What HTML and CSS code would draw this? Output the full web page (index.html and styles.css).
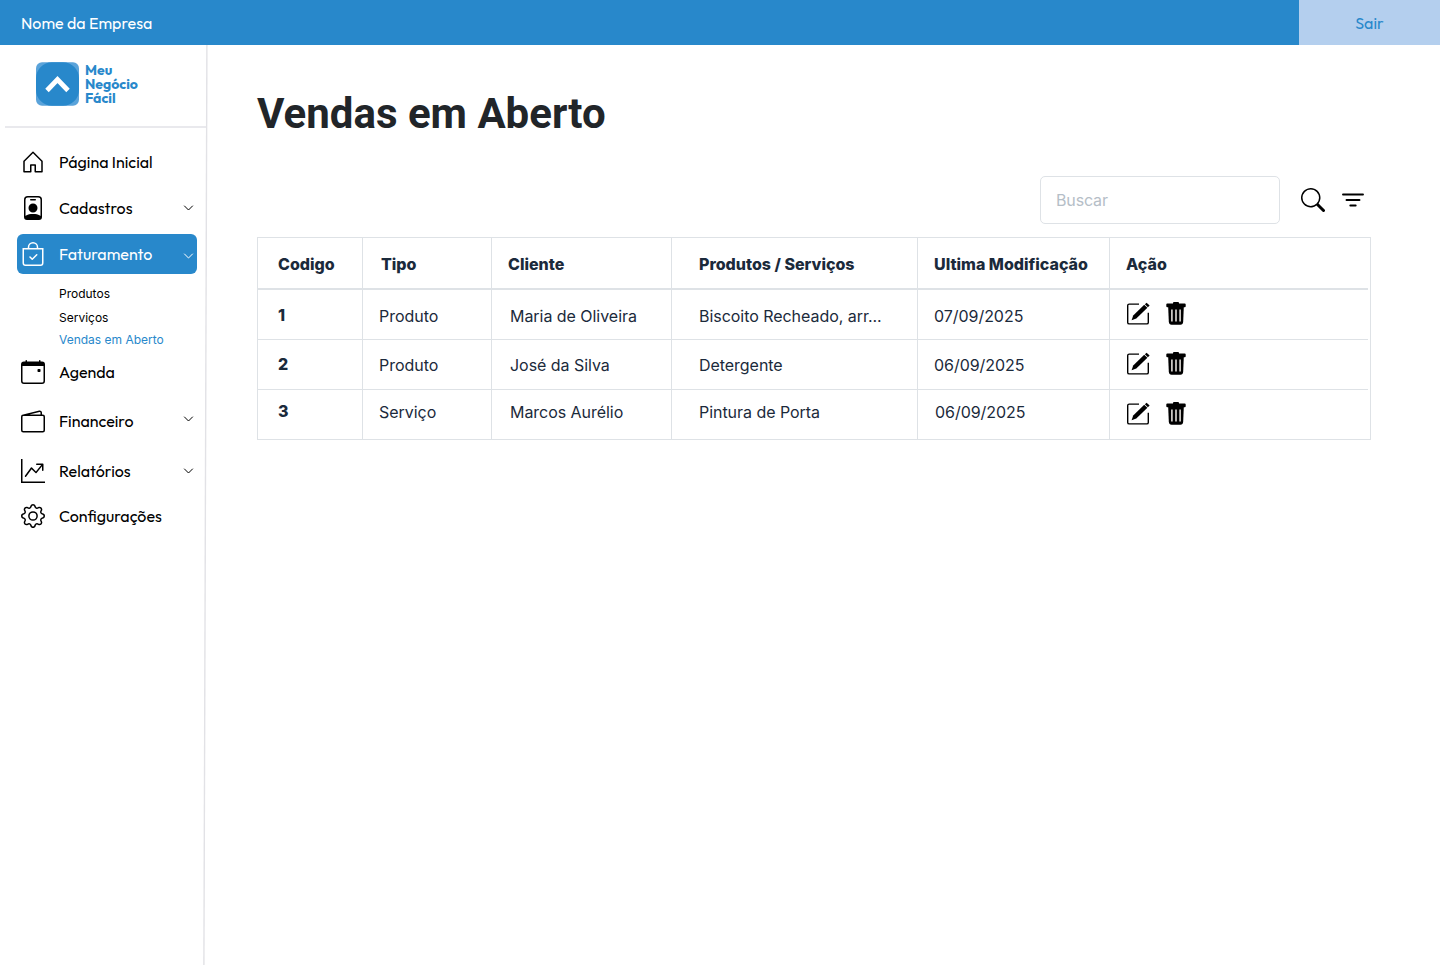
FILE: index.html
```html
<!DOCTYPE html>
<html lang="pt-BR">
<head>
<meta charset="utf-8">
<title>Vendas em Aberto</title>
<link rel="stylesheet" href="styles.css">
</head>
<body>
<svg class="defs" width="0" height="0">
  <symbol id="chevron" viewBox="0 0 12 8"><path d="M1.200 1.700 5.500 6l4.300-4.300" fill="none" stroke="currentColor" stroke-width="1"/></symbol>
  <symbol id="edit" viewBox="0 0 24 24">
    <path d="M13 2.1H3.2Q1.7 2.1 1.7 3.6v16.8q0 1.5 1.5 1.5h17.6q1.5 0 1.5-1.5V10.7" fill="none" stroke="#000" stroke-width="1.4"/>
    <path d="M5.6 18.3 7.2 13.4 18.200 2.800l3.200 3L10.300 16.600Z"/><path d="m18.900 2.200 1.700-1.500 3 2.900-1.700 1.600Z"/>
  </symbol>
  <symbol id="trash" viewBox="0 0 20 24">
    <path d="M2.2 5h15.6l-.6 14.6q-.2 3.2-2.8 3.2H5.6q-2.6 0-2.8-3.2Z"/>
    <path d="M7 1.500V1Q7 0 8 0h4q1 0 1 1v.5h5.700q1 0 1 1v1.700q0 1-1 1H1.300q-1 0-1-1V2.500q0-1 1-1Z"/>
    <path d="M5.900 7.500v12M10 7.500v12M14.100 7.500v12" stroke="#e0dcd8" stroke-width="1.600"/>
  </symbol>
</svg>
<header class="topbar"><span class="company">Nome da Empresa</span><a class="logout">Sair</a></header>
<div class="layout">
  <aside class="sidebar">
    <svg class="divider" width="6" height="920" viewBox="0 0 6 920"><path d="M4.900 0 1.900 920" stroke="#e2e2e6" stroke-width="1.400"/></svg>
    <div class="brand">
      <svg width="43" height="44" viewBox="0 0 43 44"><rect y=".3" width="43" height="43.500" rx="6" fill="#5aa3da"/><rect y=".3" width="43" height="43.500" rx="16" fill="#2888cb"/><path d="m11 28.500 10.500-11 10.500 11" fill="none" stroke="#fff" stroke-width="4.800"/></svg>
      <div class="brand-name"><span>Meu</span><span>Negócio</span><span>Fácil</span></div>
    </div>
    <nav class="nav">
      <a class="item"><svg class="icon" viewBox="0 0 16 16"><path d="M8.354 1.146a.5.5 0 0 0-.708 0l-6 6A.5.5 0 0 0 1.500 7.500v7a.5.5 0 0 0 .5.5h4.500a.5.5 0 0 0 .5-.5v-4h2v4a.5.5 0 0 0 .5.5H14a.5.5 0 0 0 .5-.5v-7a.5.5 0 0 0-.146-.354zM2.500 14V7.707l5.500-5.500 5.500 5.500V14H10v-4a.5.5 0 0 0-.5-.5h-3a.5.5 0 0 0-.5.5v4z"/></svg><span>Página Inicial</span></a>
      <a class="item cadastros"><svg class="icon" viewBox="0 0 16 16"><path d="M6.500 2a.5.5 0 0 0 0 1h3a.5.5 0 0 0 0-1zM11 8a3 3 0 1 1-6 0 3 3 0 0 1 6 0z"/><path d="M4.500 0A2.500 2.500 0 0 0 2 2.500V14a2 2 0 0 0 2 2h8a2 2 0 0 0 2-2V2.500A2.500 2.500 0 0 0 11.500 0zM3 2.500A1.500 1.500 0 0 1 4.500 1h7A1.500 1.500 0 0 1 13 2.500v10.795a4.200 4.200 0 0 0-.776-.492C11.392 12.387 10.063 12 8 12s-3.392.387-4.224.803a4.200 4.200 0 0 0-.776.492z"/></svg><span>Cadastros</span><svg class="chev"><use href="#chevron"/></svg></a>
      <a class="item active"><svg class="icon" viewBox="0 0 16 16"><path d="M10.854 8.146a.5.5 0 0 1 0 .708l-3 3a.5.5 0 0 1-.708 0l-1.500-1.500a.5.5 0 0 1 .708-.708L7.500 10.793l2.646-2.647a.5.5 0 0 1 .708 0z"/><path d="M8 1a2.500 2.500 0 0 1 2.500 2.500V4h-5v-.5A2.500 2.500 0 0 1 8 1zm3.500 3v-.5a3.500 3.500 0 1 0-7 0V4H1v10a2 2 0 0 0 2 2h10a2 2 0 0 0 2-2V4zM2 5h12v9a1 1 0 0 1-1 1H3a1 1 0 0 1-1-1z"/></svg><span>Faturamento</span><svg class="chev"><use href="#chevron"/></svg></a>
      <div class="submenu"><a>Produtos</a><a>Serviços</a><a class="current">Vendas em Aberto</a></div>
      <a class="item agenda"><svg class="icon" viewBox="0 0 16 16"><path d="M11 6.500a.5.5 0 0 1 .5-.5h1a.5.5 0 0 1 .5.5v1a.5.5 0 0 1-.5.5h-1a.5.5 0 0 1-.5-.5z"/><path d="M3.500 0a.5.5 0 0 1 .5.5V1h8V.5a.5.5 0 0 1 1 0V1h1a2 2 0 0 1 2 2v11a2 2 0 0 1-2 2H2a2 2 0 0 1-2-2V3a2 2 0 0 1 2-2h1V.5a.5.5 0 0 1 .5-.5M1 4v10a1 1 0 0 0 1 1h12a1 1 0 0 0 1-1V4z"/></svg><span>Agenda</span></a>
      <a class="item financeiro"><svg class="icon" viewBox="0 0 16 16"><path d="M12.136.326A1.500 1.500 0 0 1 14 1.780V3h.5A1.500 1.500 0 0 1 16 4.500v9a1.500 1.500 0 0 1-1.500 1.500h-13A1.500 1.500 0 0 1 0 13.500v-9a1.500 1.500 0 0 1 1.432-1.499zM5.562 3H13V1.780a.5.5 0 0 0-.621-.484zM1.500 4a.5.5 0 0 0-.5.5v9a.5.5 0 0 0 .5.5h13a.5.5 0 0 0 .5-.5v-9a.5.5 0 0 0-.5-.5z"/></svg><span>Financeiro</span><svg class="chev"><use href="#chevron"/></svg></a>
      <a class="item relatorios"><svg class="icon" viewBox="0 0 16 16"><path fill-rule="evenodd" d="M0 0h1v15h15v1H0zm10 3.500a.5.5 0 0 1 .5-.5h4a.5.5 0 0 1 .5.5v4a.5.5 0 0 1-1 0V4.900l-3.613 4.417a.5.5 0 0 1-.74.037L7.060 6.767l-3.656 5.027a.5.5 0 0 1-.808-.588l4-5.500a.5.5 0 0 1 .758-.06l2.609 2.610L13.445 4H10.500a.5.5 0 0 1-.5-.5"/></svg><span>Relatórios</span><svg class="chev"><use href="#chevron"/></svg></a>
      <a class="item config"><svg class="icon" viewBox="0 0 16 16"><path d="M8 4.754a3.246 3.246 0 1 0 0 6.492 3.246 3.246 0 0 0 0-6.492zM5.754 8a2.246 2.246 0 1 1 4.492 0 2.246 2.246 0 0 1-4.492 0z"/><path d="M9.796 1.343c-.527-1.790-3.065-1.790-3.592 0l-.094.319a.873.873 0 0 1-1.255.52l-.292-.16c-1.640-.892-3.433.902-2.540 2.541l.159.292a.873.873 0 0 1-.52 1.255l-.319.094c-1.790.527-1.790 3.065 0 3.592l.319.094a.873.873 0 0 1 .52 1.255l-.16.292c-.892 1.640.901 3.434 2.541 2.540l.292-.159a.873.873 0 0 1 1.255.52l.094.319c.527 1.790 3.065 1.790 3.592 0l.094-.319a.873.873 0 0 1 1.255-.52l.292.16c1.640.893 3.434-.902 2.540-2.541l-.159-.292a.873.873 0 0 1 .52-1.255l.319-.094c1.790-.527 1.790-3.065 0-3.592l-.319-.094a.873.873 0 0 1-.52-1.255l.16-.292c.893-1.640-.902-3.433-2.541-2.540l-.292.159a.873.873 0 0 1-1.255-.52zm-2.633.283c.246-.835 1.428-.835 1.674 0l.094.319a1.873 1.873 0 0 0 2.693 1.115l.291-.16c.764-.415 1.600.42 1.184 1.185l-.159.292a1.873 1.873 0 0 0 1.116 2.692l.318.094c.835.246.835 1.428 0 1.674l-.319.094a1.873 1.873 0 0 0-1.115 2.693l.16.291c.415.764-.42 1.600-1.185 1.184l-.291-.159a1.873 1.873 0 0 0-2.693 1.116l-.094.318c-.246.835-1.428.835-1.674 0l-.094-.319a1.873 1.873 0 0 0-2.692-1.115l-.292.16c-.764.415-1.600-.42-1.184-1.185l.159-.291A1.873 1.873 0 0 0 1.945 8.930l-.319-.094c-.835-.246-.835-1.428 0-1.674l.319-.094A1.873 1.873 0 0 0 3.060 4.377l-.16-.292c-.415-.764.42-1.600 1.185-1.184l.292.159a1.873 1.873 0 0 0 2.692-1.115z"/></svg><span>Configurações</span></a>
    </nav>
  </aside>
  <main class="content">
    <h1>Vendas em Aberto</h1>
    <div class="tools">
      <input class="search" type="text" placeholder="Buscar">
      <svg class="icon find" viewBox="0 0 16 16"><path d="M11.742 10.344a6.500 6.500 0 1 0-1.397 1.398h-.001c.03.04.062.078.098.115l3.850 3.850a1 1 0 0 0 1.415-1.414l-3.850-3.850a1.007 1.007 0 0 0-.115-.1zM12 6.500a5.500 5.500 0 1 1-11 0 5.500 5.500 0 0 1 11 0z"/></svg>
      <svg class="filter" width="24" height="24" viewBox="0 0 24 24"><path d="M2 6.500h20M5.500 12h13M9.300 17.500h5.400" stroke="#000" stroke-width="1.900" stroke-linecap="round"/></svg>
    </div>
    <div class="table">
      <div class="row head"><div>Codigo</div><div>Tipo</div><div>Cliente</div><div>Produtos / Serviços</div><div>Ultima Modificação</div><div>Ação</div></div>
      <div class="row first"><div>1</div><div>Produto</div><div>Maria de Oliveira</div><div>Biscoito Recheado, arr...</div><div>07/09/2025</div><div><svg class="edit"><use href="#edit"/></svg><svg class="trash"><use href="#trash"/></svg></div></div>
      <div class="row second"><div>2</div><div>Produto</div><div>José da Silva</div><div>Detergente</div><div>06/09/2025</div><div><svg class="edit"><use href="#edit"/></svg><svg class="trash"><use href="#trash"/></svg></div></div>
      <div class="row third"><div>3</div><div>Serviço</div><div>Marcos Aurélio</div><div>Pintura de Porta</div><div>06/09/2025</div><div><svg class="edit"><use href="#edit"/></svg><svg class="trash"><use href="#trash"/></svg></div></div>
    </div>
  </main>
</div>
</body>
</html>
```
FILE: styles.css
```css
* { box-sizing: border-box; }
body { margin: 0; background: #fff; font-family: Inter, sans-serif; color: #000; height: 965px; overflow: hidden; }
svg { display: block; flex: none; }
.defs { position: absolute; }
.topbar { height: 45px; background: #2888cb; display: flex; justify-content: space-between; font: 300 16px/46px Outfit, Lato, sans-serif; font-weight: 400; color: #fff; }
.company { padding-left: 21px; }
.logout { width: 141px; background: #b4cfee; color: #2888cb; text-align: center; }
.layout { display: flex; height: 920px; }
.sidebar { width: 208px; position: relative; }
.divider { position: absolute; right: 0; top: 0; }
.brand { height: 83px; margin: 0 2px 0 5px; padding: 17px 0 0 31px; border-bottom: 2px solid #e9e9ed; display: flex; gap: 6px; }
.brand-name { display: flex; flex-direction: column; font: 700 14px/14px Outfit, Lato, sans-serif; color: #2888cb; padding-top: 1px; }
.nav { padding: 14px 11px 0 17px; display: flex; flex-direction: column; }
.item { height: 40px; display: flex; align-items: center; padding: 0 2px 0 4px; font: 400 16px/24px Outfit, Lato, sans-serif; border-radius: 6px; margin-bottom: 6px; }
.icon { width: 24px; height: 24px; fill: currentColor; margin-right: 14px; }
.chev { width: 12px; height: 8px; margin-left: auto; }
.active { background: #2888cb; color: #fff; margin-bottom: 0; }
.active .chev { margin-top: 4px; }
.submenu { height: 78px; padding: 11px 0 0 42px; display: flex; flex-direction: column; font-size: 12px; line-height: 18px; }
.submenu a { margin-bottom: 6px; }
.submenu .current { color: #2888cb; margin-top: -2px; }
.agenda { margin-bottom: 9px; }
.financeiro { margin-bottom: 10px; }
.financeiro .icon { margin-top: 1px; }
.relatorios { margin-bottom: 5px; }
.financeiro .chev { margin-top: -5px; }
.content { padding: 41px 69px 0 49px; flex: 1; }
h1 { margin: 0; font: 700 42px/56px Roboto, sans-serif; color: #212529; }
.tools { display: flex; align-items: center; justify-content: flex-end; padding: 34px 6px 0 0; margin-bottom: 13px; }
.search { width: 240px; height: 48px; border: 1px solid #dee2e6; border-radius: 5px; padding: 0 15px; font: 16px Inter, sans-serif; letter-spacing: -.15px; margin-right: 21px; outline: 0; }
.search::placeholder { color: #b5bec7; opacity: 1; }
.find { margin-right: 16px; }
.table { border: 1px solid #dee2e6; width: 1114px; color: #1b2a3b; font-size: 16px; line-height: 24px; letter-spacing: -.04px; }
.row { display: grid; grid-template-columns: 104px 129px 180px 246px 192px 261px; height: 50px; }
.row > div { border-left: 1px solid #dee2e6; border-bottom: 1px solid #dee2e6; padding: 14px 0 0 16px; white-space: nowrap; }
.row > div:first-child { border-left: 0; padding-left: 20px; padding-top: 13px; font-weight: 800; }
.row > div:nth-child(3) { padding-left: 18px; }
.row > div:nth-child(4) { padding-left: 27px; }
.row > div:last-child { display: flex; gap: 16px; padding-top: 12px; margin-right: 2px; }
.head { height: 52px; font-weight: 800; letter-spacing: 0; }
.head > div, .head > div:first-child, .head > div:last-child { border-bottom-width: 2px; padding-top: 14px; }
.head > div:nth-child(2) { padding-left: 18px; }
.row.head > div:nth-child(3) { padding-left: 16px; }
.row.second > div { padding-top: 13px; }
.row.second > div:first-child, .row.second > div:last-child { padding-top: 12px; }
.row.third { height: 49px; }
.row.third > div { border-bottom: 0; padding-top: 10px; }
.row.third > div:first-child { padding-top: 9px; }
.row.third > div:last-child { padding-top: 12px; }
.row.third > div:nth-child(5) { padding-left: 17px; }
.edit { width: 24px; height: 24px; }
.trash { width: 20px; height: 24px; }
```
